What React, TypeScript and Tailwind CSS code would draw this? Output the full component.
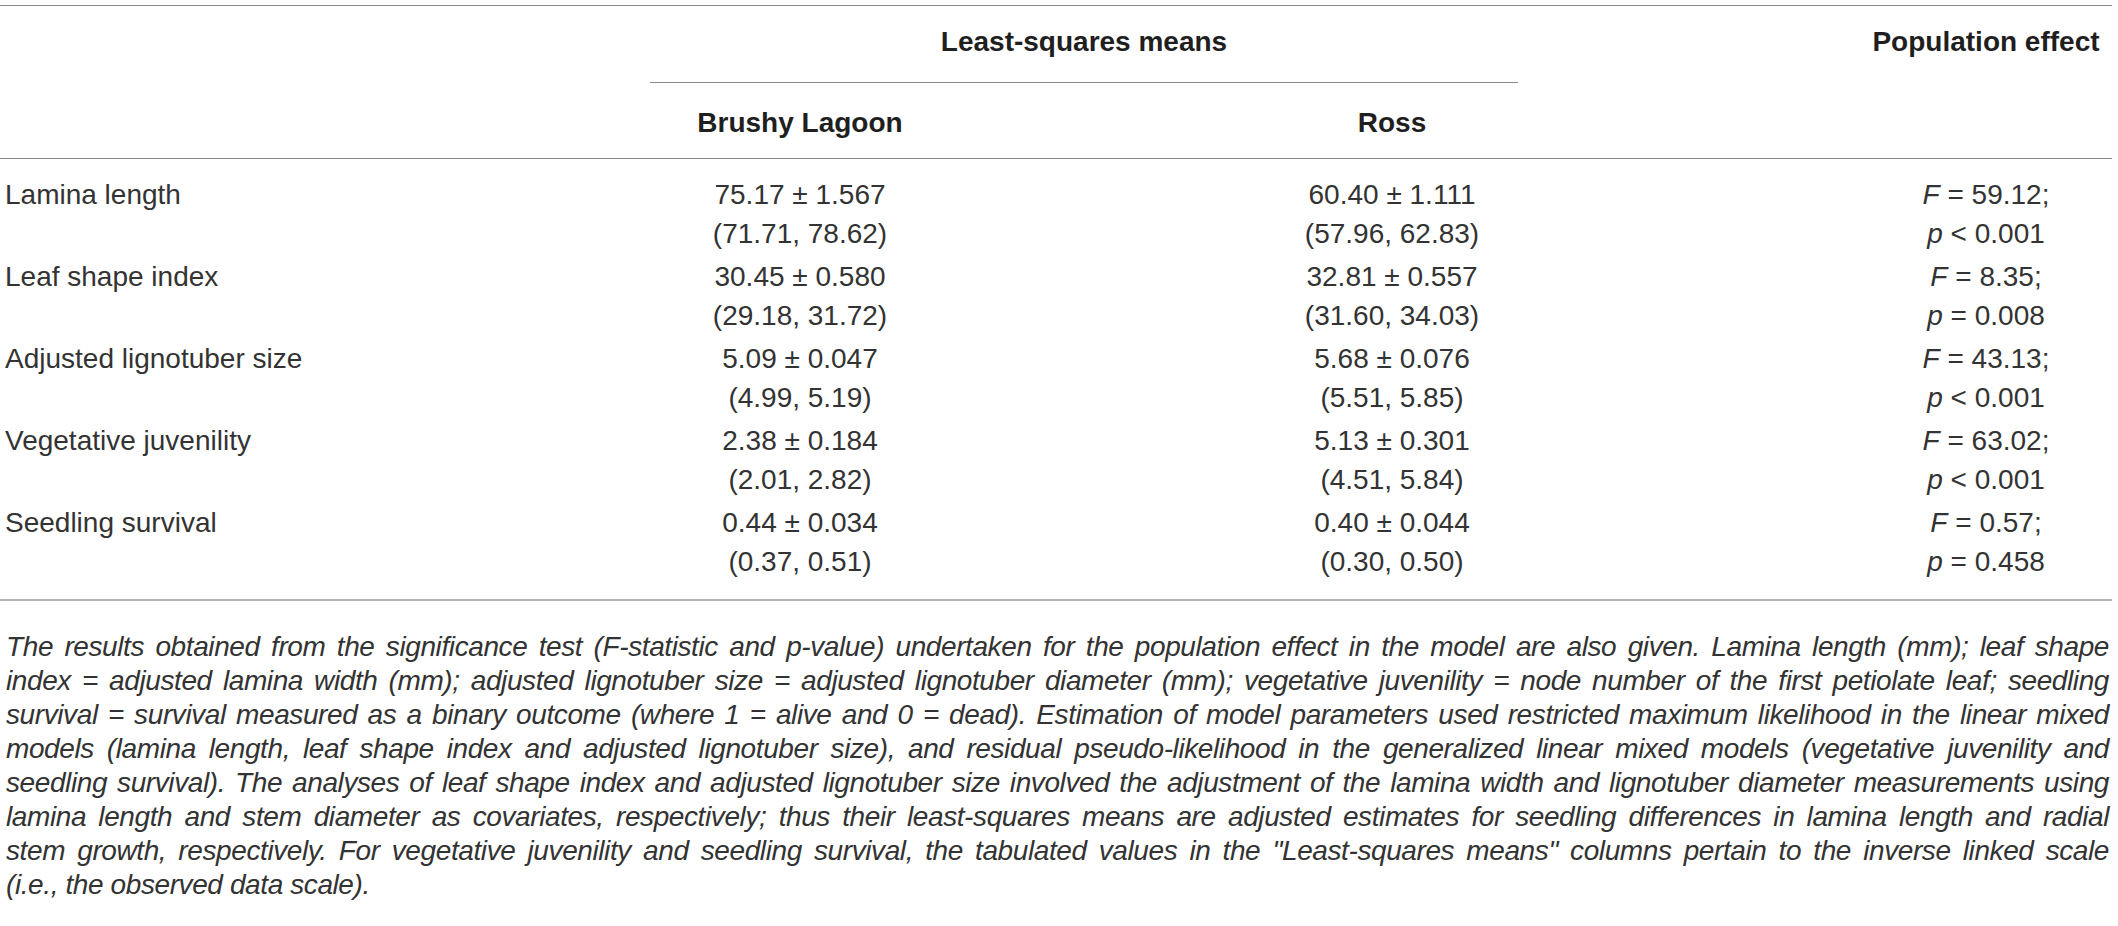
import React from 'react';

const rows = [
  { label: 'Lamina length', bl: ['75.17 ± 1.567', '(71.71, 78.62)'], ross: ['60.40 ± 1.111', '(57.96, 62.83)'], f: '59.12', p: '< 0.001' },
  { label: 'Leaf shape index', bl: ['30.45 ± 0.580', '(29.18, 31.72)'], ross: ['32.81 ± 0.557', '(31.60, 34.03)'], f: '8.35', p: '= 0.008' },
  { label: 'Adjusted lignotuber size', bl: ['5.09 ± 0.047', '(4.99, 5.19)'], ross: ['5.68 ± 0.076', '(5.51, 5.85)'], f: '43.13', p: '< 0.001' },
  { label: 'Vegetative juvenility', bl: ['2.38 ± 0.184', '(2.01, 2.82)'], ross: ['5.13 ± 0.301', '(4.51, 5.84)'], f: '63.02', p: '< 0.001' },
  { label: 'Seedling survival', bl: ['0.44 ± 0.034', '(0.37, 0.51)'], ross: ['0.40 ± 0.044', '(0.30, 0.50)'], f: '0.57', p: '= 0.458' },
];

// caption lines are justified one by one so the breaks match the printed table
const caption = [
  'The results obtained from the significance test (F-statistic and p-value) undertaken for the population effect in the model are also given. Lamina length (mm); leaf shape',
  'index = adjusted lamina width (mm); adjusted lignotuber size = adjusted lignotuber diameter (mm); vegetative juvenility = node number of the first petiolate leaf; seedling',
  'survival = survival measured as a binary outcome (where 1 = alive and 0 = dead). Estimation of model parameters used restricted maximum likelihood in the linear mixed',
  'models (lamina length, leaf shape index and adjusted lignotuber size), and residual pseudo-likelihood in the generalized linear mixed models (vegetative juvenility and',
  'seedling survival). The analyses of leaf shape index and adjusted lignotuber size involved the adjustment of the lamina width and lignotuber diameter measurements using',
  'lamina length and stem diameter as covariates, respectively; thus their least-squares means are adjusted estimates for seedling differences in lamina length and radial',
  'stem growth, respectively. For vegetative juvenility and seedling survival, the tabulated values in the "Least-squares means" columns pertain to the inverse linked scale',
];

function DataRow({ row }: { row: (typeof rows)[number] }) {
  return (
    <div className="flex py-[2px] leading-[39px]">
      <div className="w-[676px] pl-[5px]">{row.label}</div>
      <div className="w-[248px] text-center">
        <div>{row.bl[0]}</div>
        <div>{row.bl[1]}</div>
      </div>
      <div className="w-[936px] text-center">
        <div>{row.ross[0]}</div>
        <div>{row.ross[1]}</div>
      </div>
      <div className="w-[252px] text-center">
        <div>
          <i>F</i> = {row.f};
        </div>
        <div>
          <i>p</i> {row.p}
        </div>
      </div>
    </div>
  );
}

export default function App() {
  return (
    <div className="w-[2118px] h-[926px] bg-white text-[#333333] text-[28px] font-['Liberation_Sans',Arial,sans-serif]">
      <div className="w-[2112px] pt-[5px]">
        <div className="border-t border-[#8a8a8a]">
          <div className="flex pt-[16px] font-bold leading-[40px] text-[#1f1f1f]">
            <div className="w-[650px]" />
            <div className="w-[868px] text-center pb-[20px] border-b border-[#8a8a8a]">Least-squares means</div>
            <div className="flex-1" />
            <div className="w-[252px] text-center">Population effect</div>
          </div>
          <div className="flex pt-[20px] pb-[15px] font-bold leading-[40px] text-[#1f1f1f]">
            <div className="w-[676px]" />
            <div className="w-[248px] text-center">Brushy Lagoon</div>
            <div className="w-[936px] text-center">Ross</div>
            <div className="w-[252px]" />
          </div>
        </div>
        <div className="border-t border-b-2 border-t-[#8a8a8a] border-b-[#b4b4b4] pt-[14px] pb-[16px]">
          {rows.map((r) => (
            <DataRow key={r.label} row={r} />
          ))}
        </div>
        <div className="mt-[29px] pl-[6px] pr-[3px] italic leading-[34px] tracking-[-0.4px]">
          {caption.map((line) => (
            <div key={line} className="whitespace-nowrap text-justify [text-align-last:justify]">
              {line}
            </div>
          ))}
          <div className="whitespace-nowrap">(i.e., the observed data scale).</div>
        </div>
      </div>
    </div>
  );
}
